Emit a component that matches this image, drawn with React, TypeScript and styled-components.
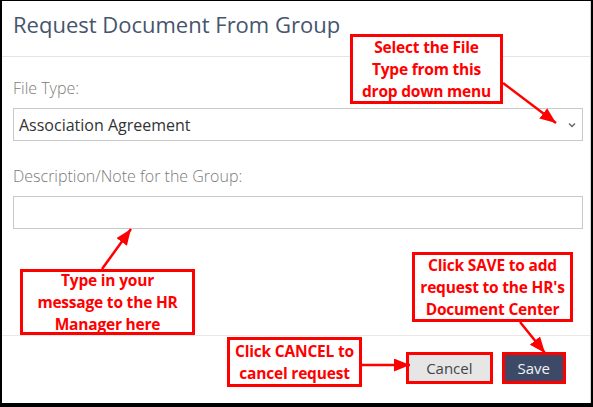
import React from 'react'
import styled, { createGlobalStyle } from 'styled-components'

const GlobalStyle = createGlobalStyle`
  html, body {
    margin: 0;
    padding: 0;
    background: #fff;
  }
  * {
    box-sizing: border-box;
  }
`

const Frame = styled.div`
  position: relative;
  width: 593px;
  height: 407px;
  border-style: solid;
  border-color: #000;
  border-width: 1px 2px 4px 2px;
  background: #fff;
  font-family: 'Open Sans', 'Noto Sans', sans-serif;
  overflow: hidden;
`

const Dialog = styled.div`
  height: 100%;
  display: flex;
  flex-direction: column;
  border-right: 1px solid #d6d6d6;
`

const Header = styled.div`
  height: 56px;
  padding: 8px 11px 0;
  border-bottom: 1px solid #e5e5e5;
`

const Title = styled.h4`
  margin: 0;
  font-size: 22px;
  line-height: 30px;
  font-weight: 400;
  color: #46556d;
`

const Body = styled.div`
  flex: 1;
  padding: 20px 7px 0 11px;
  display: flex;
  flex-direction: column;
  gap: 24px;
`

const Field = styled.div`
  display: flex;
  flex-direction: column;
  gap: 9px;
`

const Label = styled.label`
  font-size: 16px;
  line-height: 22px;
  font-weight: 300;
  color: #7b7b7b;
`

const SelectBox = styled.div`
  height: 33px;
  border: 1px solid #c9c9c9;
  display: flex;
  align-items: center;
  justify-content: space-between;
  padding: 0 6px 0 5px;
  font-size: 16px;
  color: #333;
`

const TextInput = styled.div`
  height: 33px;
  border: 1px solid #c9c9c9;
`

const Footer = styled.div`
  height: 68px;
  border-top: 1px solid #e8e8e8;
  display: flex;
  justify-content: flex-end;
  align-items: flex-start;
  gap: 9px;
  padding: 16px 24px 0 0;
`

const Button = styled.button<{ $primary?: boolean }>`
  height: 32px;
  padding: 0 ${p => (p.$primary ? '13px' : '17px')};
  border: 3px solid #ff0000;
  background: ${p => (p.$primary ? '#3c4a68' : '#e6e6e6')};
  color: ${p => (p.$primary ? '#f2f2f2' : '#444')};
  font-family: inherit;
  font-size: 15px;
  line-height: 24px;
`

const Overlay = styled.div`
  position: absolute;
  top: -1px;
  left: -2px;
  width: 593px;
  height: 407px;
  pointer-events: none;
`

const Arrows = styled.svg`
  position: absolute;
  inset: 0;
`

const Callout = styled.div<{ $x: number; $y: number; $w: number; $h: number }>`
  position: absolute;
  left: ${p => p.$x}px;
  top: ${p => p.$y}px;
  width: ${p => p.$w}px;
  height: ${p => p.$h}px;
  border: 3px solid #ff0000;
  background: #fff;
  color: #ff0000;
  font-weight: 700;
  font-size: 15.5px;
  letter-spacing: -0.2px;
  line-height: 22px;
  text-align: center;
  display: flex;
  flex-direction: column;
  justify-content: center;
`

const arrows = [
  [503, 83, 556, 123],
  [102, 269, 131, 229],
  [520, 322, 545, 353],
  [362, 365, 410, 365],
]

export default function App() {
  return (
    <>
      <GlobalStyle />
      <Frame>
        <Dialog>
          <Header>
            <Title>Request Document From Group</Title>
          </Header>
          <Body>
            <Field>
              <Label>File Type:</Label>
              <SelectBox>
                <span>Association Agreement</span>
                <svg width="8" height="6" viewBox="0 0 8 6">
                  <path d="M1 1.5 L4 4.5 L7 1.5" fill="none" stroke="#666" strokeWidth="1.4" />
                </svg>
              </SelectBox>
            </Field>
            <Field>
              <Label>Description/Note for the Group:</Label>
              <TextInput />
            </Field>
          </Body>
          <Footer>
            <Button>Cancel</Button>
            <Button $primary>Save</Button>
          </Footer>
        </Dialog>
        <Overlay>
          <Arrows width="593" height="407">
            <defs>
              <marker id="head" markerUnits="userSpaceOnUse" markerWidth="17" markerHeight="13" refX="16" refY="6.5" orient="auto">
                <path d="M0 0 L16 6.5 L0 13 z" fill="#ff0000" />
              </marker>
            </defs>
            {arrows.map(([x1, y1, x2, y2], i) => (
              <line key={i} x1={x1} y1={y1} x2={x2} y2={y2} stroke="#ff0000" strokeWidth="2.5" markerEnd="url(#head)" />
            ))}
          </Arrows>
          <Callout $x={350} $y={34} $w={153} $h={70}>
            <div>Select the File</div>
            <div>Type from this</div>
            <div>drop down menu</div>
          </Callout>
          <Callout $x={20} $y={269} $w={175} $h={66}>
            <div>Type in your</div>
            <div>message to the HR</div>
            <div>Manager here</div>
          </Callout>
          <Callout $x={412} $y={252} $w={161} $h={70}>
            <div>Click SAVE to add</div>
            <div>request to the HR's</div>
            <div>Document Center</div>
          </Callout>
          <Callout $x={227} $y={337} $w={135} $h={50}>
            <div>Click CANCEL to</div>
            <div>cancel request</div>
          </Callout>
        </Overlay>
      </Frame>
    </>
  )
}
